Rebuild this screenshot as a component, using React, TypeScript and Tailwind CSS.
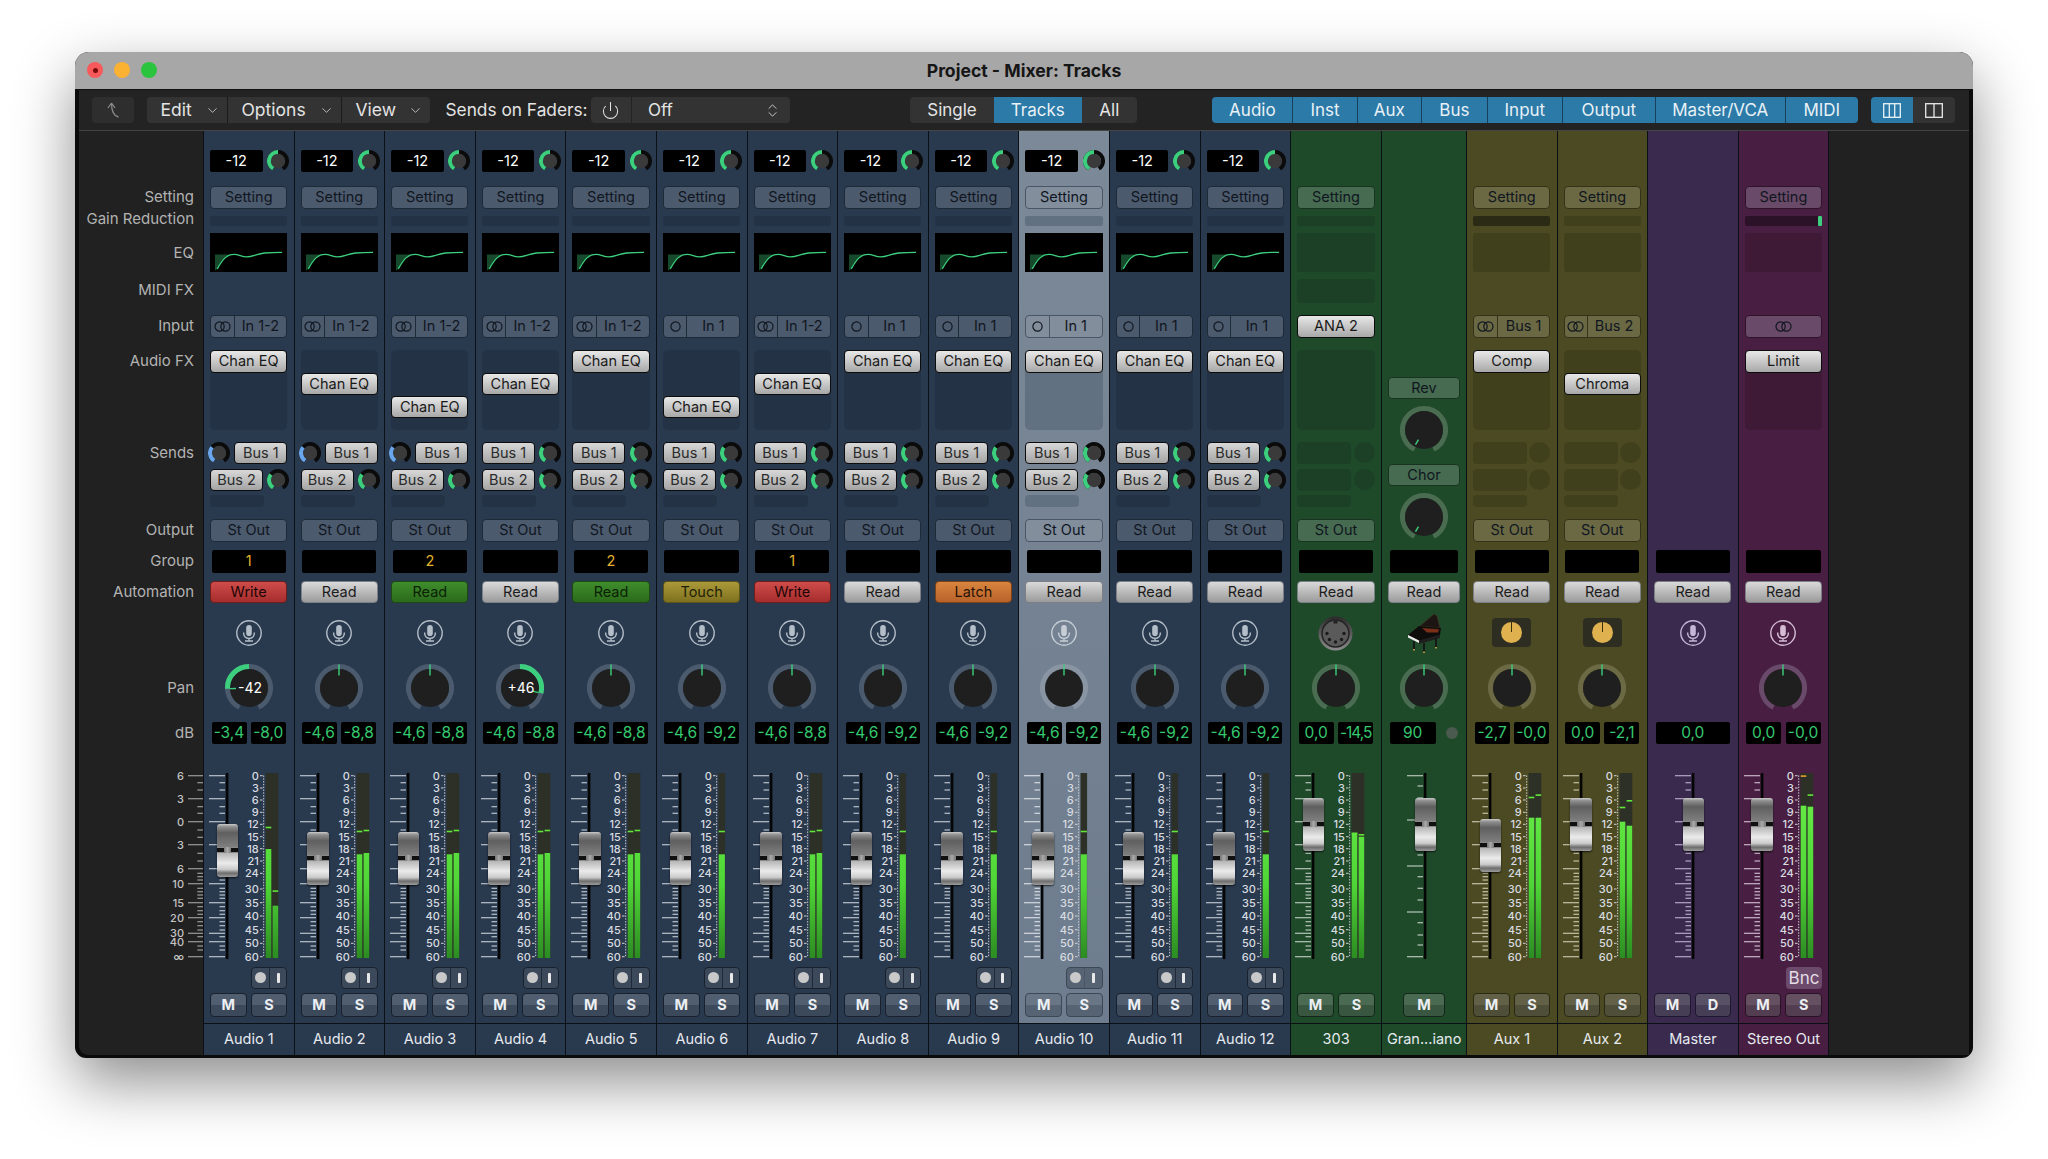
import { ChevronDown, ChevronsUpDown, Power } from 'lucide-react'
import type { ReactNode } from 'react'

// row heights + gaps, shared by the label column and every channel strip
const R = {
  gain: 'mt-[19px] h-[22px]',
  setting: 'mt-[14px] h-[23px]',
  gr: 'mt-[7px] h-[10px]',
  eq: 'mt-[7px] h-[39px]',
  midi: 'mt-[6.5px] h-[24.5px]',
  input: 'mt-[12px] h-[22.5px]',
  fx: 'mt-[12.5px] h-[80px]',
  sends: 'mt-[11.5px] h-[65px]',
  output: 'mt-[12.5px] h-[22.5px]',
  group: 'mt-[8.5px] h-[22.5px]',
  auto: 'mt-[8px] h-[22.5px]',
  icon: 'mt-[15px] h-[30px]',
  pan: 'mt-[16px] h-[48px]',
  db: 'mt-[9.5px] h-[22.5px]',
  fader: 'mt-[29px] h-[186px]',
  rec: 'mt-[7.5px] h-[22.5px]',
  ms: 'mt-[4px] h-[23.5px]',
  name: 'mt-[6px] h-[32.5px]',
}
const P = 'pl-[6px] pr-[6.3px]'

type Theme = {
  bg: string
  slot: string
  btn: string
  btnBorder: string
  ms: string
  rec: string
  nameBg: string
  ring: string
  tick: string
  mic: string
}

const blue: Theme = {
  bg: 'bg-[#29394e]',
  slot: 'bg-[#233345]',
  btn: 'bg-[#4c5a6d]',
  btnBorder: 'border-[#1f2a39]',
  ms: 'border-[#18212d] bg-[linear-gradient(180deg,#505e70_0%,#505e70_48%,#3c495a_52%,#3c495a_100%)]',
  rec: 'border-[#18212d] bg-[#3c495a]',
  nameBg: '',
  ring: '#4b5a6d',
  tick: '#b9c2cc',
  mic: '#b4bec9',
}
const selected: Theme = {
  bg: 'bg-[linear-gradient(180deg,#7c8998,#6d7c8e)]',
  slot: 'bg-[#627182]',
  btn: 'bg-[#828e9c]',
  btnBorder: 'border-[#4a5665]',
  ms: 'border-[#3c4856] bg-[linear-gradient(180deg,#687686_0%,#687686_48%,#566373_52%,#566373_100%)]',
  rec: 'border-[#3c4856] bg-[#566373]',
  nameBg: 'bg-[#29394e]',
  ring: '#8a95a3',
  tick: '#d5dae0',
  mic: '#c7ced6',
}
const green: Theme = {
  bg: 'bg-[#1f4a2a]',
  slot: 'bg-[#1b4026]',
  btn: 'bg-[#466b50]',
  btnBorder: 'border-[#18331f]',
  ms: 'border-[#12281a] bg-[linear-gradient(180deg,#4a6a52_0%,#4a6a52_48%,#385640_52%,#385640_100%)]',
  rec: 'border-[#12281a] bg-[#385640]',
  nameBg: '',
  ring: '#4a6d52',
  tick: '#b4c4b8',
  mic: '#b8c8bc',
}
const olive: Theme = {
  bg: 'bg-[#4c4a22]',
  slot: 'bg-[#40401c]',
  btn: 'bg-[#6a6944]',
  btnBorder: 'border-[#34331a]',
  ms: 'border-[#2a2a14] bg-[linear-gradient(180deg,#626148_0%,#626148_48%,#4f4e38_52%,#4f4e38_100%)]',
  rec: 'border-[#2a2a14] bg-[#4f4e38]',
  nameBg: '',
  ring: '#6b6a45',
  tick: '#c2c1a8',
  mic: '#c8c7b0',
}
const purple: Theme = {
  bg: 'bg-[#3a2a4e]',
  slot: 'bg-[#32243f]',
  btn: 'bg-[#5a4b6c]',
  btnBorder: 'border-[#241a33]',
  ms: 'border-[#1f1730] bg-[linear-gradient(180deg,#585064_0%,#585064_48%,#463e54_52%,#463e54_100%)]',
  rec: 'border-[#1f1730] bg-[#463e54]',
  nameBg: '',
  ring: '#5a4b6c',
  tick: '#b3a7c8',
  mic: '#c4b6d6',
}
const magenta: Theme = {
  bg: 'bg-[#481f42]',
  slot: 'bg-[#3e1a37]',
  btn: 'bg-[#694a68]',
  btnBorder: 'border-[#2f1429]',
  ms: 'border-[#2a1226] bg-[linear-gradient(180deg,#645060_0%,#645060_48%,#523e50_52%,#523e50_100%)]',
  rec: 'border-[#2a1226] bg-[#694a68]',
  nameBg: '',
  ring: '#6a4a6a',
  tick: '#c8b4c6',
  mic: '#d4bcd4',
}

const polar = (c: number, r: number, deg: number) => {
  const a = ((deg - 90) * Math.PI) / 180
  return [c + r * Math.cos(a), c + r * Math.sin(a)]
}
const arc = (c: number, r: number, a0: number, a1: number) => {
  const [x0, y0] = polar(c, r, a0)
  const [x1, y1] = polar(c, r, a1)
  return `M${x0} ${y0}A${r} ${r} 0 ${a1 - a0 > 180 ? 1 : 0} 1 ${x1} ${y1}`
}

const Knob = ({ to, color = '#3ccf7e', className = '' }: { to: number; color?: string; className?: string }) => (
  <svg width="22" height="22" className={`shrink-0 ${className}`}>
    <path d={arc(11, 9, -148, 148)} fill="none" stroke="#0b0b0b" strokeWidth="4" />
    <circle cx="11" cy="11" r="7.2" fill="#3a3a3a" />
    <path d={arc(11, 9, -148, to)} fill="none" stroke={color} strokeWidth="4" />
  </svg>
)

const Pan = ({ ring, angle = 0, label, short }: { ring: string; angle?: number; label?: string; short?: boolean }) => {
  const [x0, y0] = polar(24, label ? 19 : short ? 11 : 12.5, angle)
  const [x1, y1] = polar(24, label ? 13 : short ? 17 : 23.5, angle)
  return (
    <svg width="48" height="48" className="mx-auto block">
      <path d={arc(24, 21.5, -154, 154)} fill="none" stroke={ring} strokeWidth="5" />
      <circle cx="24" cy="24" r="19" fill="#1f1f1f" />
      {label && (
        <path d={angle < 0 ? arc(24, 21.5, angle, 0) : arc(24, 21.5, 0, angle)} fill="none" stroke="#3ccf7e" strokeWidth="5" />
      )}
      <line x1={x0} y1={y0} x2={x1} y2={y1} stroke="#3ccf7e" strokeWidth="1.4" />
      {label && (
        <text x="25" y="29" textAnchor="middle" fill="#fff" className="text-[14px]">
          {label}
        </text>
      )}
    </svg>
  )
}

const EqCurve = () => (
  <svg viewBox="0 0 78 39" className="h-full w-full bg-black">
    <path d="M5 21.5H24C19 21.5 15 22 7.3 36L5 38Z" fill="#174a2c" />
    <path
      d="M7.3 36C13 26 17 21.3 24.3 21.3C29 21.3 32 24 37 24C43 24 48 20.5 55 20C62 19.4 67 19.3 72.7 19.3"
      fill="none"
      stroke="#3ccf7e"
      strokeWidth="1.3"
    />
  </svg>
)

const Mic = ({ color }: { color: string }) => (
  <svg width="26" height="26" viewBox="0 0 26 26" fill="none" className="mx-auto mt-[2px] block">
    <circle cx="13" cy="13" r="12.2" stroke={color} strokeWidth="1.4" />
    <rect x="10.2" y="5" width="5.6" height="11" rx="2.8" fill={color} />
    <path d="M7.6 12.5C7.6 16.5 10 18.4 13 18.4C16 18.4 18.4 16.5 18.4 12.5" stroke={color} strokeWidth="1.4" />
    <path d="M13 18.4V20.6M9 21H17" stroke={color} strokeWidth="1.4" />
  </svg>
)

const MidiPlug = () => (
  <svg width="35" height="35" viewBox="0 0 35 35" className="mx-auto -mt-[2px] block">
    <defs>
      <linearGradient id="din" x1="0" y1="0" x2="0" y2="1">
        <stop offset="0" stopColor="#2b2b2b" />
        <stop offset="1" stopColor="#8c8c8c" />
      </linearGradient>
    </defs>
    <circle cx="17.5" cy="17.5" r="17" fill="url(#din)" />
    <circle cx="17.5" cy="17.5" r="13.5" fill="#5a5a5a" stroke="#222" strokeWidth="1.5" />
    {[-90, -45, 0, 45, 90].map((a) => {
      const [x, y] = polar(17.5, 8.5, a + 180)
      return <circle key={a} cx={x} cy={y} r="1.7" fill="#1c1c1c" />
    })}
    <rect x="15.5" y="4.5" width="4" height="3" fill="#222" />
  </svg>
)

const Piano = () => (
  <svg width="34" height="39" viewBox="0 0 34 39" className="mx-auto -mt-[4.5px] block">
    <path d="M13 12L27 0L30 2L33 14Z" fill="#1c1512" stroke="#4a3428" strokeWidth="0.6" />
    <path d="M1 21L12 12L34 14L33 21L12 27Z" fill="#0f0d0c" />
    <path d="M15 14L32 15.2L31 18.5L20 18.5Z" fill="#7a3018" />
    <path d="M1 21L12 26.5L12 29L1 23.5Z" fill="#ececec" />
    <path d="M12 26.5L33 21L33 24L12 30Z" fill="#1f1f1f" />
    <path d="M7 27L7 35M17 29L17 38M29 24L29 33" stroke="#141414" strokeWidth="1.8" />
    <path d="M7 35V36.5M17 37.5V39M29 33V34.5" stroke="#c9a24a" strokeWidth="1.8" />
  </svg>
)

const YellowKnob = () => (
  <div className="mx-auto flex h-[29px] w-[39px] items-center justify-center rounded-[4px] bg-[#2e2d22]">
    <div className="relative h-[21px] w-[21px] rounded-full bg-[#dfb24f]">
      <div className="absolute left-[10px] top-0 h-[10px] w-[1px] bg-[#3a2f10]" />
    </div>
  </div>
)

const LinkIcon = () => (
  <svg width="17" height="11" fill="none" stroke="#10161f" strokeWidth="1.2">
    <circle cx="5.6" cy="5.5" r="4.6" />
    <circle cx="11.4" cy="5.5" r="4.6" />
  </svg>
)

const Flat = ({ t, children, className = '' }: { t: Theme; children?: ReactNode; className?: string }) => (
  <div
    className={`flex h-[22.5px] items-center justify-center rounded-[4px] border text-[14.5px] text-[#10161f] ${t.btn} ${t.btnBorder} ${className}`}
  >
    {children}
  </div>
)

const Light = ({ children, className = '' }: { children?: ReactNode; className?: string }) => (
  <div
    className={`flex h-[22.5px] items-center justify-center rounded-[4px] border border-[#0c0c0c] bg-[linear-gradient(180deg,#e8e8e8,#a8a8a8)] text-[14.5px] text-[#1a1a1a] ${className}`}
  >
    {children}
  </div>
)

const LONG: [number, string][] = [
  [2.7, '6'],
  [25.7, '3'],
  [48.7, '0'],
  [71.7, '3'],
  [95.7, '6'],
  [110.7, '10'],
  [129.7, '15'],
  [144.7, '20'],
  [160.3, '30'],
  [168.7, '40'],
  [183.7, '∞'],
]
const SHORT = [
  9.7, 17, 33.7, 40.3, 57, 64.3, 80.3, 88, 100.3, 103.7, 107, 115.3, 118.7, 122, 125.3, 133.7, 137.7, 141.3, 148.7, 152.7,
  157, 163.7, 173, 177,
]
const SPARSE_LONG = [2.7, 47, 93, 139, 183.7]
const SPARSE_SHORT = [13, 25, 71.7, 82, 103.7, 115.3, 127, 149.7, 162, 172]
const METER: [number, string][] = [
  [2.7, '0'],
  [15, '3'],
  [27, '6'],
  [39.3, '9'],
  [51.3, '12'],
  [63.7, '15'],
  [75.7, '18'],
  [88, '21'],
  [100.3, '24'],
  [116, '30'],
  [129.7, '35'],
  [143, '40'],
  [156.7, '45'],
  [170.3, '50'],
  [183.7, '60'],
]

type Bar = { top: number; peak: number; peakColor?: string }

const MeterBar = ({ x, w, bar }: { x: number; w: number; bar: Bar }) => (
  <g>
    <rect x={x} y={bar.top} width={w} height={185 - bar.top} fill="url(#meterFill)" />
    <rect x={x} y={bar.peak} width={w} height="1.6" fill={bar.peakColor ?? '#62e63a'} />
  </g>
)

const FaderScale = ({ tick, meters, sparse, dx = 0 }: { tick: string; meters?: Bar[]; sparse?: boolean; dx?: number }) => (
  <svg width="92" height="186" className="absolute left-0 top-0 overflow-visible">
    <defs>
      <linearGradient id="meterFill" gradientUnits="userSpaceOnUse" x1="0" y1="0" x2="0" y2="185">
        <stop offset="0" stopColor="#6cf04a" />
        <stop offset="0.6" stopColor="#4fd636" />
        <stop offset="1" stopColor="#2c8c22" />
      </linearGradient>
    </defs>
    <g transform={`translate(${dx} 0)`}>
      {(sparse ? SPARSE_LONG : LONG.map((l) => l[0])).map((y) => (
        <rect key={y} x="5" y={y - 0.6} width="16" height="1.2" fill={tick} />
      ))}
      {(sparse ? SPARSE_SHORT : SHORT).map((y) => (
        <rect key={y} x="15.5" y={y - 0.6} width="5.5" height="1.2" fill={tick} />
      ))}
      <rect x="21.8" y="0" width="2.6" height="186" fill="#050505" />
      {meters && (
        <g>
          <rect x="61.5" y="0" width={meters.length > 1 ? 12.8 : 6.6} height="185" fill="#2c3027" />
          <line x1="59.7" y1="2.5" x2="59.7" y2="184" stroke="#cfd4d8" strokeWidth="1" strokeDasharray="1.4 1.4" />
          {METER.map(([y, label]) => (
            <g key={y}>
              <rect x="56" y={y - 0.5} width="2.6" height="1" fill="#cfd4d8" />
              <text x="54.8" y={y + 3.9} textAnchor="end" fill="#d8dce0" className="text-[11px] font-medium">
                {label}
              </text>
            </g>
          ))}
          {meters.length > 1 ? (
            <>
              <MeterBar x={61.7} w={5.6} bar={meters[0]} />
              <MeterBar x={68.6} w={5.6} bar={meters[1]} />
            </>
          ) : (
            <MeterBar x={61.7} w={6.2} bar={meters[0]} />
          )}
        </g>
      )}
    </g>
  </svg>
)

const Cap = ({ top, left }: { top: number; left: number }) => (
  <div
    className="absolute flex h-[53px] w-[21.5px] flex-col rounded-[3px] shadow-[0_1px_2px_rgba(0,0,0,0.7)]"
    style={{ top, left }}
  >
    <div className="h-[23px] rounded-t-[3px] bg-[linear-gradient(180deg,#cbcbcb_0%,#8f8f8f_12%,#5f5f5f_38%,#7f7f7f_100%)]" />
    <div className="flex h-[6px] bg-[#8a8a8a]">
      <div className="mt-[1px] h-[4px] w-[7px] bg-[#101010]" />
      <div className="flex-1 bg-[linear-gradient(90deg,#777,#aaa,#777)]" />
      <div className="mt-[1px] h-[4px] w-[7px] bg-[#101010]" />
    </div>
    <div className="h-[24px] rounded-b-[3px] bg-[linear-gradient(180deg,#b5b5b5_0%,#ebebeb_42%,#cbcbcb_68%,#6d6d6d_84%,#9c9c9c_100%)]" />
  </div>
)

type Auto = 'read' | 'write' | 'readGreen' | 'touch' | 'latch'
const AUTO: Record<Auto, string> = {
  read: 'border-[#7c8086] bg-[linear-gradient(180deg,#d9d9d9,#9b9b9b)] text-[#1c1c1c]',
  write: 'border-[#6f1d1d] bg-[linear-gradient(180deg,#cf4c4a,#a52d2c)] text-[#1d0606]',
  readGreen: 'border-[#1d4a14] bg-[linear-gradient(180deg,#3f8d2c,#2b6a1b)] text-[#0b2206]',
  touch: 'border-[#5e5518] bg-[linear-gradient(180deg,#ab9a3a,#7e701f)] text-[#231f06]',
  latch: 'border-[#7e4217] bg-[linear-gradient(180deg,#d9853f,#b8622a)] text-[#2a1305]',
}
const AUTO_LABEL: Record<Auto, string> = { read: 'Read', write: 'Write', readGreen: 'Read', touch: 'Touch', latch: 'Latch' }

type Strip = {
  name: string
  t: Theme
  w: string
  gain?: boolean
  setting?: boolean
  gr?: 'dim' | 'dark' | 'pip'
  eq?: 'curve' | 'dim'
  midi?: boolean
  input?: { mode: 'stereo' | 'mono' | 'light' | 'link'; label?: string }
  fx?: { at: number; label?: string }
  sends?: 'left' | 'right' | 'dim'
  inst?: boolean
  output?: boolean
  group?: string
  auto?: Auto
  icon: 'mic' | 'midi' | 'piano' | 'knob'
  pan?: { angle?: number; label?: string }
  db: string[]
  cap: number
  meters?: Bar[]
  sparse?: boolean
  dx?: number
  rec?: boolean
  bnc?: boolean
  ms: string[]
}

const audio = (
  n: number,
  mono: boolean,
  fxAt: number,
  sends: 'left' | 'right',
  group: string,
  auto: Auto,
  db: string[],
  meters: Bar[],
  extra: Partial<Strip> = {},
): Strip => ({
  name: `Audio ${n}`,
  t: blue,
  w: 'w-[90.6px]',
  gain: true,
  setting: true,
  gr: 'dim',
  eq: 'curve',
  input: mono ? { mode: 'mono', label: 'In 1' } : { mode: 'stereo', label: 'In 1-2' },
  fx: { at: fxAt, label: 'Chan EQ' },
  sends,
  output: true,
  group,
  auto,
  icon: 'mic',
  pan: {},
  db,
  cap: 59.3,
  meters,
  rec: true,
  ms: ['M', 'S'],
  ...extra,
})

const st: Bar[] = [
  { top: 81.3, peak: 57.7 },
  { top: 80, peak: 56.7 },
]
const mono: Bar[] = [{ top: 81.3, peak: 57.7 }]
const d88 = ['-4,6', '-8,8']
const d92 = ['-4,6', '-9,2']

const STRIPS: Strip[] = [
  audio(1, false, 0, 'left', '1', 'write', ['-3,4', '-8,0'], [{ top: 76, peak: 53.7 }, { top: 132.7, peak: 117.3 }], {
    cap: 51.3,
    pan: { angle: -92, label: '-42' },
  }),
  audio(2, false, 1, 'left', '', 'read', d88, st),
  audio(3, false, 2, 'left', '2', 'readGreen', d88, st),
  audio(4, false, 1, 'right', '', 'read', d88, st, { pan: { angle: 104, label: '+46' } }),
  audio(5, false, 0, 'right', '2', 'readGreen', d88, st),
  audio(6, true, 2, 'right', '', 'touch', d92, mono),
  audio(7, false, 1, 'right', '1', 'write', d88, st),
  audio(8, true, 0, 'right', '', 'read', d92, mono),
  audio(9, true, 0, 'right', '', 'latch', d92, mono),
  audio(10, true, 0, 'right', '', 'read', d92, mono, { t: selected }),
  audio(11, true, 0, 'right', '', 'read', d92, mono),
  audio(12, true, 0, 'right', '', 'read', d92, mono),
  {
    name: '303',
    t: green,
    w: 'w-[91px]',
    setting: true,
    gr: 'dim',
    eq: 'dim',
    midi: true,
    input: { mode: 'light', label: 'ANA 2' },
    fx: { at: -1 },
    sends: 'dim',
    output: true,
    group: '',
    auto: 'read',
    icon: 'midi',
    pan: {},
    db: ['0,0', '-14,5'],
    cap: 24.7,
    meters: [
      { top: 59.7, peak: 59.7 },
      { top: 63.7, peak: 61 },
    ],
    dx: -1,
    ms: ['M', 'S'],
  },
  {
    name: 'Gran...iano',
    t: green,
    w: 'w-[85px]',
    inst: true,
    group: '',
    auto: 'read',
    icon: 'piano',
    pan: {},
    db: ['90'],
    cap: 24.7,
    sparse: true,
    dx: 20,
    ms: ['M'],
  },
  {
    name: 'Aux 1',
    t: olive,
    w: 'w-[90.6px]',
    setting: true,
    gr: 'dark',
    eq: 'dim',
    input: { mode: 'stereo', label: 'Bus 1' },
    fx: { at: 0, label: 'Comp' },
    sends: 'dim',
    output: true,
    group: '',
    auto: 'read',
    icon: 'knob',
    pan: {},
    db: ['-2,7', '-0,0'],
    cap: 46,
    meters: [
      { top: 44.7, peak: 23.7 },
      { top: 44.7, peak: 21.3 },
    ],
    ms: ['M', 'S'],
  },
  {
    name: 'Aux 2',
    t: olive,
    w: 'w-[90.4px]',
    setting: true,
    gr: 'dim',
    eq: 'dim',
    input: { mode: 'stereo', label: 'Bus 2' },
    fx: { at: 1, label: 'Chroma' },
    sends: 'dim',
    output: true,
    group: '',
    auto: 'read',
    icon: 'knob',
    pan: {},
    db: ['0,0', '-2,1'],
    cap: 24.7,
    meters: [
      { top: 48.7, peak: 33.7 },
      { top: 52.7, peak: 27 },
    ],
    ms: ['M', 'S'],
  },
  {
    name: 'Master',
    t: purple,
    w: 'w-[90.6px]',
    group: '',
    auto: 'read',
    icon: 'mic',
    db: ['0,0'],
    cap: 24.7,
    dx: 22,
    ms: ['M', 'D'],
  },
  {
    name: 'Stereo Out',
    t: magenta,
    w: 'w-[90.6px]',
    setting: true,
    gr: 'pip',
    eq: 'dim',
    input: { mode: 'link' },
    fx: { at: 0, label: 'Limit' },
    group: '',
    auto: 'read',
    icon: 'mic',
    pan: {},
    db: ['0,0', '-0,0'],
    cap: 24.7,
    meters: [
      { top: 32.7, peak: 2.3, peakColor: '#e0a030' },
      { top: 33.7, peak: 21.3 },
    ],
    bnc: true,
    ms: ['M', 'S'],
  },
]

const InputRow = ({ s }: { s: Strip }) => {
  const { input, t } = s
  if (!input) return null
  if (input.mode === 'light') return <Light>{input.label}</Light>
  if (input.mode === 'link')
    return (
      <Flat t={t}>
        <LinkIcon />
      </Flat>
    )
  return (
    <Flat t={t} className="!justify-start">
      <div className={`flex h-full w-[23.5px] items-center justify-center border-r ${t.btnBorder}`}>
        {input.mode === 'stereo' ? (
          <LinkIcon />
        ) : (
          <svg width="11" height="11" fill="none" stroke="#10161f" strokeWidth="1.2">
            <circle cx="5.5" cy="5.5" r="4.6" />
          </svg>
        )}
      </div>
      <div className="flex-1 text-center">{input.label}</div>
    </Flat>
  )
}

const FxRow = ({ s }: { s: Strip }) => {
  if (!s.fx) return null
  return (
    <div className={`grid h-full grid-rows-[repeat(3,22.9px)] content-start rounded-[5px] ${s.t.slot}`}>
      {[0, 1, 2].map((i) => (
        <div key={i}>{i === s.fx?.at && <Light>{s.fx.label}</Light>}</div>
      ))}
    </div>
  )
}

const SendsRow = ({ s }: { s: Strip }) => {
  if (!s.sends) return null
  if (s.sends === 'dim') {
    return (
      <div className="flex flex-col">
        {[0, 1].map((i) => (
          <div key={i} className={`flex h-[22.5px] items-center justify-between ${i ? 'mt-[4.5px]' : ''}`}>
            <div className={`h-full w-[54px] rounded-[4px] ${s.t.slot}`} />
            <div className={`h-[21px] w-[21px] rounded-full ${s.t.slot}`} />
          </div>
        ))}
        <div className={`mt-[4px] h-[11.5px] w-[54px] rounded-[4px] ${s.t.slot}`} />
      </div>
    )
  }
  const bus = (label: string) => <Light className="w-[53px] !bg-[linear-gradient(180deg,#d8d8d8,#a4a4a4)] text-[#2a2a2a]">{label}</Light>
  return (
    <div className="flex flex-col">
      <div className="flex h-[22.5px] items-center justify-between">
        {s.sends === 'left' ? (
          <>
            <Knob to={-50} color="#6aa6ec" className="-ml-[2px]" />
            {bus('Bus 1')}
          </>
        ) : (
          <>
            {bus('Bus 1')}
            <Knob to={-52} className="-mr-[2px]" />
          </>
        )}
      </div>
      <div className="mt-[4.5px] flex h-[22.5px] items-center justify-between">
        {bus('Bus 2')}
        <Knob to={-52} className="-mr-[2px]" />
      </div>
      <div className={`mt-[4px] h-[11.5px] w-[54px] rounded-[4px] ${s.t.slot}`} />
    </div>
  )
}

const ChannelStrip = ({ s }: { s: Strip }) => {
  const { t } = s
  return (
    <div className={`flex shrink-0 flex-col border-l border-[#0b1016] ${s.w} ${t.bg}`}>
      <div className={`flex items-center justify-between ${R.gain} ${P}`}>
        {s.gain && (
          <>
            <div className="flex h-full w-[52.5px] items-center justify-center rounded-[2px] bg-black text-[14.5px] text-white">-12</div>
            <Knob to={0} className="-mr-[2px]" />
          </>
        )}
      </div>
      <div className={`${R.setting} ${P}`}>{s.setting && <Flat t={t}>Setting</Flat>}</div>
      <div className={`${R.gr} ${P}`}>
        {s.gr === 'dim' && <div className={`h-full rounded-[2px] ${t.slot}`} />}
        {s.gr === 'dark' && <div className="h-full rounded-[2px] bg-[#2b2a14]" />}
        {s.gr === 'pip' && (
          <div className="flex h-full justify-end rounded-[2px] bg-[#2c1228]">
            <div className="h-full w-[4px] rounded-[1px] bg-[#3ccf7e]" />
          </div>
        )}
      </div>
      <div className={`${R.eq} ${P}`}>
        {s.eq === 'curve' && <EqCurve />}
        {s.eq === 'dim' && <div className={`h-full rounded-[3px] ${t.slot}`} />}
      </div>
      <div className={`${R.midi} ${P}`}>{s.midi && <div className={`h-full rounded-[4px] ${t.slot}`} />}</div>
      <div className={`${R.input} ${P}`}>
        <InputRow s={s} />
      </div>
      {s.inst ? (
        <div className={`mt-[12.5px] flex h-[191.5px] flex-col items-center pt-[26.7px] ${P}`}>
          <Flat t={t} className="w-full">
            Rev
          </Flat>
          <div className="mt-[6.7px]">
            <Pan ring={t.ring} angle={-150} short />
          </div>
          <Flat t={t} className="mt-[9.7px] w-full">
            Chor
          </Flat>
          <div className="mt-[6.7px]">
            <Pan ring={t.ring} angle={-150} short />
          </div>
        </div>
      ) : (
        <>
          <div className={`${R.fx} ${P}`}>
            <FxRow s={s} />
          </div>
          <div className={`${R.sends} ${P}`}>
            <SendsRow s={s} />
          </div>
          <div className={`${R.output} ${P}`}>{s.output && <Flat t={t}>St Out</Flat>}</div>
        </>
      )}
      <div className={`${R.group} ${P}`}>
        <div className="mx-[1.5px] flex h-full items-center justify-center rounded-[2px] bg-black text-[14.5px] text-[#e3b32d]">{s.group}</div>
      </div>
      <div className={`${R.auto} ${P}`}>
        {s.auto && (
          <div
            className={`flex h-full items-center justify-center rounded-[4px] border text-[14.5px] ${AUTO[s.auto]}`}
          >
            {AUTO_LABEL[s.auto]}
          </div>
        )}
      </div>
      <div className={`${R.icon} ${P}`}>
        {s.icon === 'mic' && <Mic color={t.mic} />}
        {s.icon === 'midi' && <MidiPlug />}
        {s.icon === 'piano' && <Piano />}
        {s.icon === 'knob' && <YellowKnob />}
      </div>
      <div className={`${R.pan} ${P}`}>{s.pan && <Pan ring={t.ring} angle={s.pan.angle} label={s.pan.label} />}</div>
      <div className={`flex gap-[4.3px] ${R.db} ${P}`}>
        {s.db.length === 1 && s.name !== 'Master' ? (
          <>
            <div className="ml-[1.5px] flex h-full w-[46px] items-center justify-center rounded-[2px] bg-black text-[15.5px] text-[#35c96f]">{s.db[0]}</div>
            <div className="ml-[6px] mt-[5px] h-[12px] w-[12px] rounded-full bg-[#4a5a4e]" />
          </>
        ) : (
          <div className="mx-[1.5px] flex h-full flex-1 gap-[4.3px]">
            {s.db.map((v) => (
              <div
                key={v}
                className={`flex h-full flex-1 items-center justify-center rounded-[2px] bg-black text-[15.5px] text-[#35c96f] ${
                  v.length > 4 ? 'tracking-[-1px]' : ''
                }`}
              >
                {v}
              </div>
            ))}
          </div>
        )}
      </div>
      <div className={`relative ${R.fader}`}>
        <FaderScale tick={t.tick} meters={s.meters} sparse={s.sparse} dx={s.dx} />
        <Cap top={s.cap} left={12.7 + (s.dx ?? 0)} />
      </div>
      <div className={`flex justify-end ${R.rec} ${P}`}>
        {s.rec && (
          <div className={`flex h-full w-[36.5px] rounded-[4px] border ${t.rec}`}>
            <div className={`flex w-[18px] items-center justify-center border-r ${t.btnBorder}`}>
              <div className="h-[11px] w-[11px] rounded-full bg-[#c9c9c9]" />
            </div>
            <div className="flex flex-1 items-center justify-center">
              <div className="h-[10px] w-[3px] rounded-[1px] bg-[#e8e8e8]" />
            </div>
          </div>
        )}
        {s.bnc && (
          <div className="flex h-full w-[36px] items-center justify-center rounded-[4px] bg-[#6b4a6c] text-[17px] text-[#e5dde5]">Bnc</div>
        )}
      </div>
      <div className={`flex justify-center gap-[4px] ${R.ms} ${P}`}>
        {s.ms.map((m) => (
          <div
            key={m}
            className={`flex h-full items-center justify-center rounded-[4px] border text-[14.5px] font-bold text-[#eceff2] ${t.ms} ${
              s.ms.length === 1 ? 'w-[42px]' : 'flex-1'
            }`}
          >
            {m}
          </div>
        ))}
      </div>
      <div className={`flex items-center justify-center border-t border-[#0b1016] text-[14.5px] text-[#e6eaef] ${R.name} ${t.nameBg}`}>
        {s.name}
      </div>
    </div>
  )
}

const Label = ({ row, children }: { row: string; children?: ReactNode }) => (
  <div className={`${row} pr-[9px] text-right text-[15px] text-[#b3b3b3]`}>
    <div className="flex h-[22.5px] items-center justify-end">{children}</div>
  </div>
)

const LabelColumn = () => (
  <div className="flex w-[124px] shrink-0 flex-col">
    <div className={R.gain} />
    <Label row={R.setting}>Setting</Label>
    <div className="mt-[1px] flex h-[18px] items-center justify-end pr-[9px] text-[15px] text-[#b3b3b3]">Gain Reduction</div>
    <div className="mt-[5px] flex h-[39px] items-center justify-end pr-[9px] text-[15px] text-[#b3b3b3]">EQ</div>
    <Label row={R.midi}>MIDI FX</Label>
    <Label row={R.input}>Input</Label>
    <Label row={R.fx}>Audio FX</Label>
    <Label row={R.sends}>Sends</Label>
    <Label row={R.output}>Output</Label>
    <Label row={R.group}>Group</Label>
    <Label row={R.auto}>Automation</Label>
    <div className={R.icon} />
    <div className={`${R.pan} flex items-center justify-end pr-[9px] text-[15px] text-[#b3b3b3]`}>Pan</div>
    <Label row={R.db}>dB</Label>
    <div className={R.fader}>
      <svg width="124" height="186" className="overflow-visible">
        {LONG.map(([y, label], i) => (
          <g key={i}>
            <rect x="109" y={y - 0.6} width="15" height="1.2" fill="#9a9a9a" />
            <text x="105" y={y + 3.9} textAnchor="end" fill="#c4c4c4" className="text-[11px] font-medium">
              {label}
            </text>
          </g>
        ))}
        {SHORT.map((y) => (
          <rect key={y} x="118.3" y={y - 0.6} width="5.7" height="1.2" fill="#9a9a9a" />
        ))}
      </svg>
    </div>
  </div>
)

const Seg = ({ w, active, children, className = '' }: { w: string; active?: boolean; children?: ReactNode; className?: string }) => (
  <div
    className={`flex h-full items-center justify-center text-[17px] ${w} ${
      active ? 'bg-[#2c7aa8] text-[#e8f1f6]' : 'bg-[#333333] text-[#e4e4e4]'
    } ${className}`}
  >
    {children}
  </div>
)

const Menu = ({ w, label }: { w: string; label: string }) => (
  <div className={`flex h-full items-center justify-between pl-[13.5px] pr-[7px] text-[17.5px] text-[#e4e4e4] ${w}`}>
    {label}
    <ChevronDown size={15} strokeWidth={1.4} className="text-[#c8c8c8]" />
  </div>
)

const Toolbar = () => (
  <div className="flex h-[41px] shrink-0 items-center border-b border-[#444444] bg-[#232323]">
    <div className="ml-[12.6px] flex h-[26px] w-[42px] items-center justify-center rounded-[4px] bg-[#2e2e2e]">
      <svg width="20" height="20" viewBox="0 0 20 20" fill="none" stroke="#8a8a8a" strokeWidth="1.3">
        <path d="M8.5 3L5 8M8.5 3L12 8M8.5 3C8.5 11 10 16 15.5 17" />
      </svg>
    </div>
    <div className="ml-[13.4px] flex h-[26px] divide-x divide-[#1c1c1c] rounded-[4px] bg-[#333333]">
      <Menu w="w-[81px]" label="Edit" />
      <Menu w="w-[114px]" label="Options" />
      <Menu w="w-[88px]" label="View" />
    </div>
    <div className="ml-[15.5px] w-[145.5px] whitespace-nowrap text-[17.3px] text-[#e4e4e4]">Sends on Faders:</div>
    <div className="flex h-[26px] w-[40px] items-center justify-center rounded-l-[4px] bg-[#333333]">
      <Power size={19} strokeWidth={1.3} className="text-[#e4e4e4]" />
    </div>
    <div className="ml-[1px] flex h-[26px] w-[158px] items-center justify-between rounded-r-[4px] bg-[#333333] pl-[16px] pr-[9px] text-[17px] text-[#e4e4e4]">
      Off
      <ChevronsUpDown size={17} strokeWidth={1.4} className="text-[#c8c8c8]" />
    </div>
    <div className="ml-[120px] flex h-[26px] overflow-hidden rounded-[4px]">
      <Seg w="w-[84px]">Single</Seg>
      <Seg w="w-[87.6px]" active>
        Tracks
      </Seg>
      <Seg w="w-[55.4px]">All</Seg>
    </div>
    <div className="ml-[75.4px] flex h-[26px] divide-x divide-[#17415a] overflow-hidden rounded-[4px]">
      <Seg w="w-[81px]" active>
        Audio
      </Seg>
      <Seg w="w-[64.4px]" active>
        Inst
      </Seg>
      <Seg w="w-[64.2px]" active>
        Aux
      </Seg>
      <Seg w="w-[65.9px]" active>
        Bus
      </Seg>
      <Seg w="w-[75.1px]" active>
        Input
      </Seg>
      <Seg w="w-[92.6px]" active>
        Output
      </Seg>
      <Seg w="w-[130.4px]" active>
        Master/VCA
      </Seg>
      <Seg w="w-[71.8px]" active>
        MIDI
      </Seg>
    </div>
    <div className="ml-[12.8px] flex h-[26px] overflow-hidden rounded-[4px]">
      <Seg w="w-[42.4px]" active>
        <svg width="18" height="15" fill="none" stroke="#eaf3f8" strokeWidth="1.3">
          <rect x="0.7" y="0.7" width="16.6" height="13.6" />
          <path d="M6.3 1V14M11.7 1V14" />
        </svg>
      </Seg>
      <Seg w="w-[42.4px]">
        <svg width="18" height="15" fill="none" stroke="#eaeaea" strokeWidth="1.3">
          <rect x="0.7" y="0.7" width="16.6" height="13.6" />
          <path d="M9 1V14" />
        </svg>
      </Seg>
    </div>
  </div>
)

const App = () => {
  return (
    <div className="h-[1159px] w-[2048px] overflow-hidden bg-white pl-[75px] pt-[52px] font-[Inter,sans-serif] leading-[18px]">
      <div className="flex h-[1006px] w-[1898px] flex-col overflow-hidden rounded-t-[14px] rounded-b-[11px] bg-[#0b0b0b] shadow-[0_24px_60px_rgba(0,0,0,0.45)]">
        <div className="relative flex h-[38px] shrink-0 items-center justify-center border-b border-[#111111] bg-[#a7a7a7]">
          <div className="absolute left-[12px] top-[10px] flex gap-[11px]">
            <div className="flex h-[16px] w-[16px] items-center justify-center rounded-full bg-[#f8595a]">
              <div className="h-[5px] w-[5px] rounded-full bg-[#7a0a0a]" />
            </div>
            <div className="h-[16px] w-[16px] rounded-full bg-[#fbb232]" />
            <div className="h-[16px] w-[16px] rounded-full bg-[#2ac43f]" />
          </div>
          <span className="text-[17.6px] font-bold text-[#161616]">Project - Mixer: Tracks</span>
        </div>
        <div className="ml-[4px] mr-[4px] flex h-[965px] flex-col rounded-b-[9px] bg-[#212121]">
          <Toolbar />
          <div className="flex min-h-0 flex-1">
            <LabelColumn />
            {STRIPS.map((s) => (
              <ChannelStrip key={s.name} s={s} />
            ))}
            <div className="flex-1 border-l border-[#0b1016] bg-[#212121]" />
          </div>
        </div>
      </div>
    </div>
  )
}

export default App
